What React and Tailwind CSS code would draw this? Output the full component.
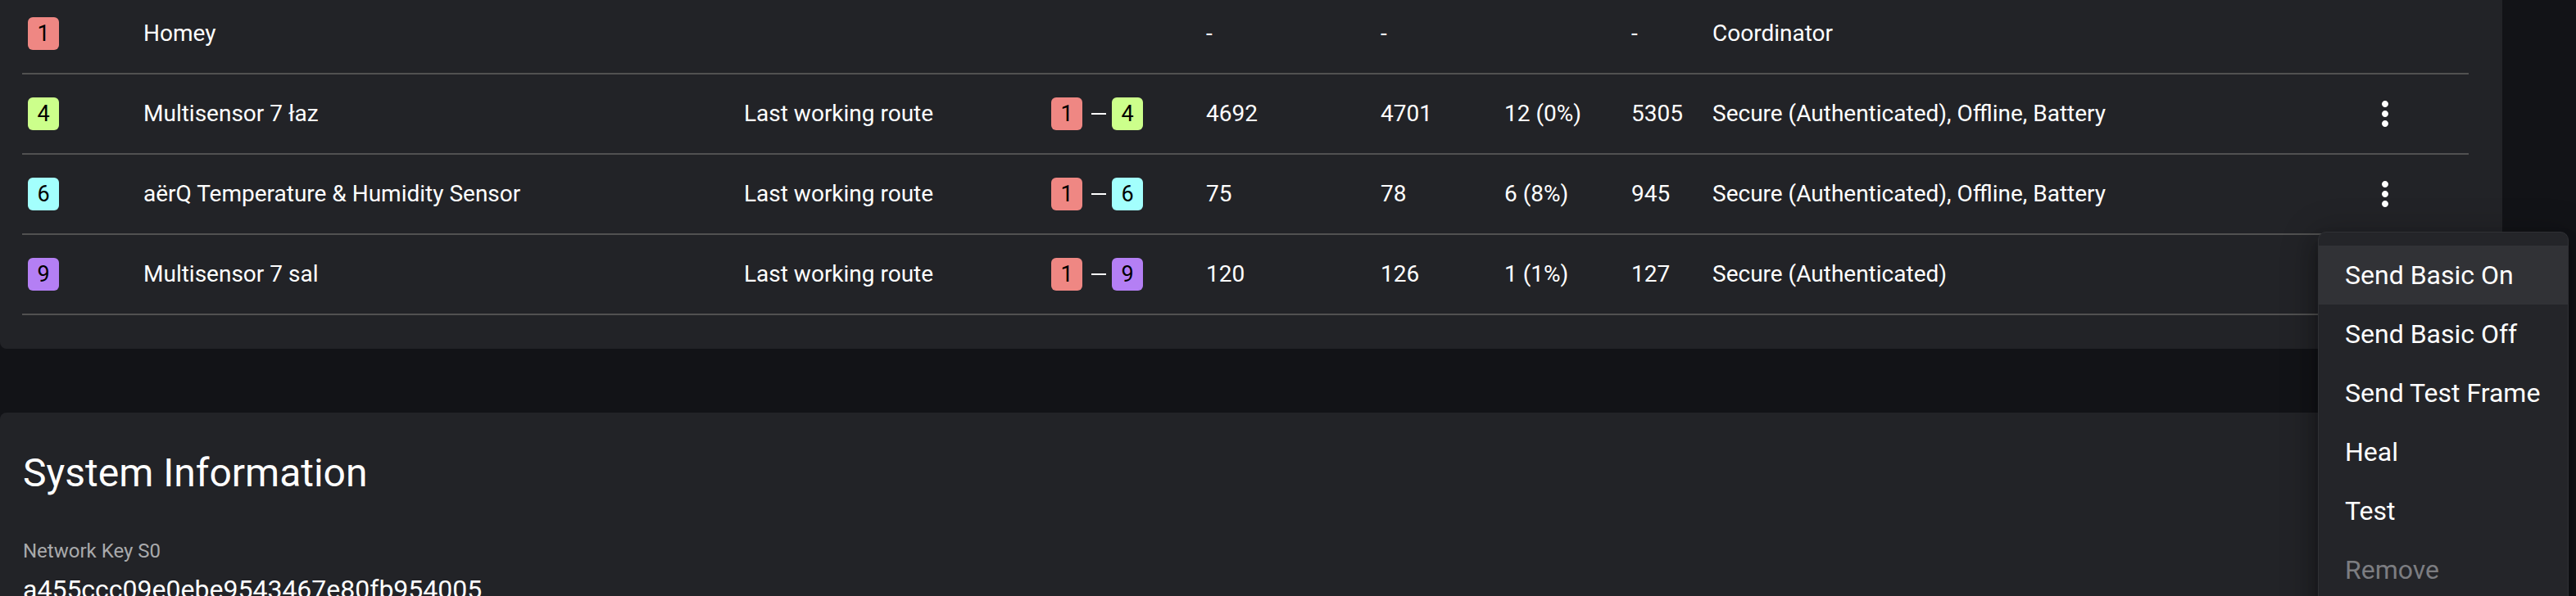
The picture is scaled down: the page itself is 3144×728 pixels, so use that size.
import React from "react";

const COLORS = {
  1: "bg-[#ef8783]",
  4: "bg-[#ccff8b]",
  6: "bg-[#a3fffd]",
  9: "bg-[#b47ff4]",
};

function Badge({ n }) {
  return (
    <span
      className={`inline-flex w-[38px] h-[40px] items-center justify-center rounded-[6px] text-[27px] leading-none text-black ${COLORS[n]}`}
    >
      {n}
    </span>
  );
}

function Kebab() {
  return (
    <svg width="48" height="48" viewBox="0 0 24 24" fill="#ffffff">
      <path d="M12 8c1.1 0 2-.9 2-2s-.9-2-2-2-2 .9-2 2 .9 2 2 2zm0 2c-1.1 0-2 .9-2 2s.9 2 2 2 2-.9 2-2-.9-2-2-2zm0 6c-1.1 0-2 .9-2 2s.9 2 2 2 2-.9 2-2-.9-2-2-2z" />
    </svg>
  );
}

const rows = [
  { id: 1, name: "Homey", route: null, a: "-", b: "-", c: "", d: "-", status: "Coordinator", menu: false },
  { id: 4, name: "Multisensor 7 łaz", route: 4, a: "4692", b: "4701", c: "12 (0%)", d: "5305", status: "Secure (Authenticated), Offline, Battery", menu: true },
  { id: 6, name: "aërQ Temperature & Humidity Sensor", route: 6, a: "75", b: "78", c: "6 (8%)", d: "945", status: "Secure (Authenticated), Offline, Battery", menu: true },
  { id: 9, name: "Multisensor 7 sal", route: 9, a: "120", b: "126", c: "1 (1%)", d: "127", status: "Secure (Authenticated)", menu: false },
];

const menuItems = ["Send Basic On", "Send Basic Off", "Send Test Frame", "Heal", "Test", "Remove"];

export default function App() {
  return (
    <div className="relative w-[3144px] h-[728px] overflow-hidden bg-[#121317] font-['Roboto','Noto_Sans',sans-serif] text-white">
      {/* Nodes table card */}
      <div className="w-[3054px] -mt-[7px] bg-[#222327] rounded-b-[8px] pl-[27px] pr-[41px] pb-[41px]">
        {rows.map((r) => (
          <div
            key={r.id}
            className="grid grid-cols-[148px_733px_375px_189px_213px_151px_155px_99px_797px_126px] h-[98px] items-center border-b-2 border-[#515151] text-[28px]"
          >
            <div className="pl-[7px] flex items-center">
              <Badge n={r.id} />
            </div>
            <div>{r.name}</div>
            <div>{r.route ? "Last working route" : ""}</div>
            <div className="flex items-center">
              {r.route ? (
                <>
                  <Badge n={1} />
                  <span className="ml-[11px] mr-[7px] w-[18px] h-[2px] bg-white" />
                  <Badge n={r.route} />
                </>
              ) : null}
            </div>
            <div>{r.a}</div>
            <div>{r.b}</div>
            <div>{r.c}</div>
            <div>{r.d}</div>
            <div>{r.status}</div>
            <div className="flex items-center">
              {r.menu ? <Kebab /> : null}
            </div>
          </div>
        ))}
      </div>

      {/* System information card */}
      <div className="w-[3054px] mt-[78px] bg-[#222327] rounded-t-[8px] pl-[28px] pt-[42px] h-[400px]">
        <h2 className="text-[48px] leading-[64px] font-normal">System Information</h2>
        <div className="mt-[45px] text-[24px] leading-[36px] text-[#a9aaac]">Network Key S0</div>
        <div className="mt-[5px] text-[32px] leading-[48px]">a455ccc09e0ebe9543467e80fb954005</div>
      </div>

      {/* Context menu */}
      <div className="absolute left-[2829px] top-[283px] w-[306px] h-[480px] rounded-[10px] border border-[#2f3034] bg-[#242529] pt-[16px] shadow-[0_10px_10px_-6px_rgba(0,0,0,0.3),0_16px_20px_2px_rgba(0,0,0,0.22),0_6px_40px_8px_rgba(0,0,0,0.2)]">
        {menuItems.map((m, i) => (
          <div
            key={m}
            className={`h-[72px] flex items-center pl-[32px] text-[32px] ${i === 0 ? "bg-[#313236]" : ""} ${m === "Remove" ? "text-[#7c7d81]" : "text-white"}`}
          >
            {m}
          </div>
        ))}
      </div>
    </div>
  );
}
